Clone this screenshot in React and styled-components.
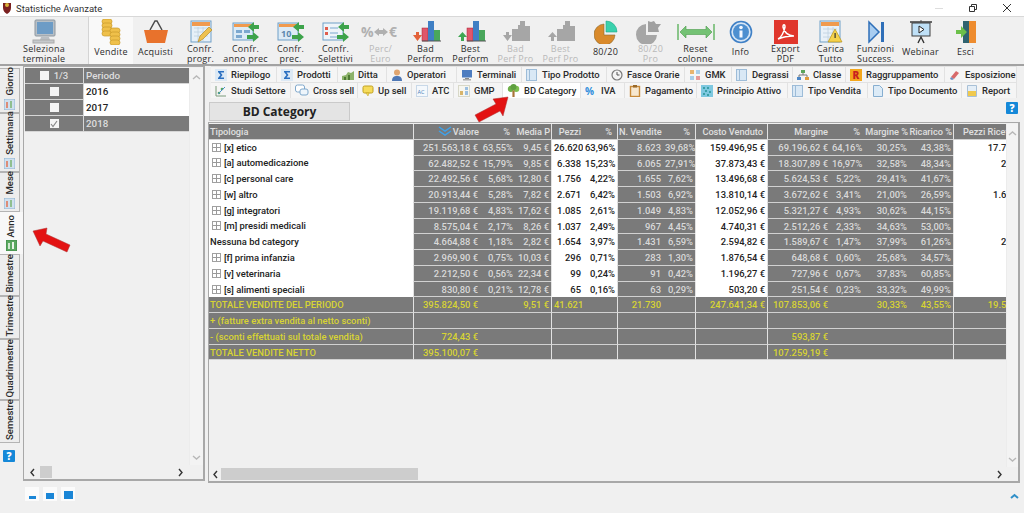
import React from 'react';
import styled, { createGlobalStyle } from 'styled-components';

const Global = createGlobalStyle`
  html, body { margin: 0; padding: 0; background: #f0f0f0; }
  * { box-sizing: border-box; }
`;
const Page = styled.div`
  position: relative; width: 1024px; height: 513px; overflow: hidden;
  display: flex; flex-direction: column; background: #f0f0f0;
  font-family: Roboto, "Liberation Sans", sans-serif; color: #222;
`;
const TitleBar = styled.div`
  height: 16px; background: #fff; display: flex; align-items: center; padding-left: 2px;
  font-size: 9.5px; color: #333; flex: none;
`;
const TitleText = styled.span` margin-left: 4px; flex: 1; `;
const WinButton = styled.span`
  width: 34px; display: flex; justify-content: center; align-items: center; height: 14px;
`;
const Toolbar = styled.div`
  height: 50px; flex: none; display: flex; background: #f0f0f0;
  border-top: 1px solid #d8d8d8; border-bottom: 2px solid #a2a2a2;
`;
const ToolFirst = styled.div`
  width: 89px; flex: none; display: flex; flex-direction: column; align-items: center;
  padding-top: 3px; border-right: 1px solid #d4d4d4;
`;
const Tool = styled.div`
  width: 45px; flex: none; display: flex; flex-direction: column; align-items: center; padding-top: 3px;
  background: ${p => (p.$active ? '#f9f9f9' : 'transparent')};
  ${p => p.$active && 'width: 44px;'}
`;
const ToolIcon = styled.div`
  height: 24px; flex: none; display: flex; align-items: center; justify-content: center;
`;
const ToolLabel = styled.div`
  flex: 1; display: flex; align-items: center; text-align: center; justify-content: center;
  font-family: "Open Sans", sans-serif;
  font-size: 9px; line-height: 9.5px; white-space: pre-line; letter-spacing: .25px; margin-bottom: 4px;
  color: ${p => (p.$off ? '#b9b9b9' : '#2c2c2c')};
`;
const Main = styled.div` flex: 1; display: flex; min-height: 0; `;
const SideTabs = styled.div` width: 23px; flex: none; display: flex; flex-direction: column; padding-top: 2px; `;
const SideTab = styled.div`
  height: ${p => p.$h}px; width: ${p => (p.$active ? 23 : 20)}px; flex: none;
  display: flex; align-items: center; justify-content: flex-start; gap: 3px; padding: 2px 0;
  flex-direction: column-reverse;
  background: ${p => (p.$active ? '#f8f8f8' : '#ededed')};
  border: 1px solid ${p => (p.$active ? '#f8f8f8' : '#b4b4b4')};
  border-left: none; font-size: 9.6px; font-weight: 500; color: #2a2a2a;
`;
const SideLabel = styled.span`
  writing-mode: vertical-rl; transform: rotate(180deg); white-space: nowrap; line-height: 12px;
`;
const SideHelp = styled.div` margin: 7px 0 0 3px; `;
const LeftColumn = styled.div` width: 182px; flex: none; display: flex; flex-direction: column; `;
const LeftPanel = styled.div`
  height: 415px; flex: none; border: 1px solid #a8a8a8; border-width: 1px 2px 2px 1px;
  display: flex; flex-direction: column; padding: 1px 0 0 1px;
`;
const PanelBody = styled.div` flex: 1; display: flex; min-height: 0; `;
const PeriodTable = styled.div` flex: 1; `;
const PeriodRow = styled.div` display: grid; grid-template-columns: 59px 1fr; height: 16px; `;
const PeriodCheckCell = styled.div`
  background: #7a7a7a; border-bottom: 1px solid #d6d6d6; display: flex; align-items: center; justify-content: center;
  gap: 5px; font-size: 9.6px; color: #ddd; font-weight: 500; border-right: 1px solid #d6d6d6;
`;
const PeriodCell = styled.div`
  background: ${p => (p.$white ? '#fff' : '#7a7a7a')};
  color: ${p => (p.$white ? '#222' : '#dedede')};
  border-bottom: 1px solid ${p => (p.$white ? '#fff' : '#d6d6d6')};
  font-size: 9.8px; font-weight: 500; padding-left: 2px; line-height: 15px;
`;
const Box = styled.span`
  width: 9px; height: 9px; background: #f4f4f4; display: inline-flex; align-items: center; justify-content: center;
`;
const VScroll = styled.div`
  width: ${p => p.$w}px; flex: none; display: flex; flex-direction: column; justify-content: space-between;
  align-items: center; padding: 5px 0 3px; background: #f3f3f3;
  border-left: 1px solid #ececec;
`;
const HScroll = styled.div`
  height: 14px; flex: none; display: flex; align-items: center; padding: 0 ${p => p.$pr}px 0 ${p => p.$pl}px; gap: ${p => p.$gap}px;
`;
const Thumb = styled.div`
  width: ${p => p.$w}px; height: 12px; background: #cdcdcd; flex: none;
`;
const Fill = styled.div` flex: 1; `;
const SizeIcons = styled.div` display: flex; align-items: flex-end; gap: 4px; padding: 4px 0 0 2px; height: 20px; `;
const SizeCell = styled.div`
  width: 14px; height: 14px; display: flex; align-items: flex-end; justify-content: center; background: #fbfbfb;
`;
const SizeBar = styled.div` background: #1b86d6; width: ${p => p.$w}px; height: ${p => p.$h}px; margin-bottom: 2px; `;
const RightColumn = styled.div` flex: 1; margin-left: 3px; margin-right: 4px; min-width: 0; display: flex; flex-direction: column; `;
const TabRow = styled.div` display: flex; height: 16px; flex: none; margin-left: 3px; `;
const Tab = styled.div`
  width: ${p => p.$w}px; flex: none; display: flex; align-items: center; gap: 4px; padding-left: 4px;
  font-size: 9.4px; font-weight: 500; color: #2a2a2a; white-space: nowrap; overflow: hidden;
  background: ${p => (p.$active ? '#fff' : '#f5f5f5')};
  border: 1px solid #e2e2e2; border-width: 1px 1px 0 0;
`;
const TitleRow = styled.div` height: 24px; flex: none; display: flex; align-items: flex-start; justify-content: space-between; padding: 4px 2px 0 1px; `;
const SectionTitle = styled.div`
  width: 141px; height: 19px; background: #e4e4e4; border: 1px solid #cacaca; text-align: center;
  font-family: "Open Sans", sans-serif;
  font-size: 12px; font-weight: 700; line-height: 17px; color: #222;
`;
const TablePanel = styled.div`
  height: 361px; flex: none; border: 1px solid #a8a8a8; border-width: 1px 2px 2px 1px;
  display: flex; flex-direction: column; padding-top: 1px;
`;
const GridWrap = styled.div` width: 797px; height: 100%; overflow: hidden; `;
const cols = '204px 67px 35px 36px 32px 34px 46px 32px 72px 63px 33px 46px 44px 66px';
const Row = styled.div` display: grid; grid-template-columns: ${cols}; height: 15.77px; `;
const Cell = styled.div`
  overflow: hidden; white-space: nowrap; font-size: 9.4px; font-weight: 500; line-height: 15px;
  text-align: ${p => (p.$left ? 'left' : 'right')}; padding: 0 2px;
  background: ${p => (p.$white ? '#fff' : '#7a7a7a')};
  color: ${p => (p.$yellow ? '#d8d433' : p.$white ? '#222' : '#d9d9d9')};
  border-bottom: 1px solid ${p => (p.$white ? '#fff' : '#d2d2d2')};
  ${p => p.$group && 'border-left: 1px solid #e2e2e2;'}
`;
const HeadCell = styled(Cell)`
  color: #e0e0e0; display: flex; justify-content: ${p => (p.$left ? 'flex-start' : 'flex-end')}; align-items: center; gap: 1px;
  font-size: 9.2px; padding: 0 1px;
  ${p => p.$pad && (p.$left ? `padding-left: ${p.$pad}px;` : `padding-right: ${p.$pad}px;`)}
`;
const NameCell = styled(Cell)` display: flex; align-items: center; gap: 3px; padding-left: ${p => (p.$exp ? 3 : 1)}px; text-align: left; `;
const Expander = styled.span`
  width: 9px; height: 9px; border: 1px solid #a0a0a0; flex: none; display: inline-flex; align-items: center; justify-content: center;
`;
const TableBody = styled.div` flex: 1; display: flex; min-height: 0; `;
const Bottom = styled.div` display: flex; justify-content: flex-end; padding: 9px 1px 0 0; `;
const OverArrow = styled.svg` position: absolute; left: ${p => p.$x}px; top: ${p => p.$y}px; `;

const S = ({ s = 12, children, v = 12 }) => <svg width={s} height={s} viewBox={`0 0 ${v} ${v}`} style={{ flex: 'none', display: 'block' }}>{children}</svg>;
const L = p => <S s={24} v={24} {...p} />;

const T = {
  monitor: <svg width="26" height="26" viewBox="0 0 26 26"><rect x="4" y="1" width="20" height="16" rx="1" fill="#b7bfc6" stroke="#8e979f" /><rect x="6" y="3" width="16" height="12" fill="#6d9cc6" /><path d="M10 18h8l1 3H9z" fill="#b9bec3" /><rect x="2" y="21" width="21" height="3" fill="#c5c9cc" stroke="#aaa" /></svg>,
  coins: <svg width="26" height="26" viewBox="0 0 26 26"><g fill="#efc04a" stroke="#c99a28" strokeWidth=".7"><rect x="4" y="0" width="10" height="5" rx="2.5" /><rect x="4" y="4" width="10" height="5" rx="2.5" /><rect x="4" y="8" width="10" height="5" rx="2.5" /><rect x="4" y="12" width="10" height="5" rx="2.5" /><rect x="12" y="9" width="10" height="5" rx="2.5" /><rect x="12" y="13" width="10" height="5" rx="2.5" /><rect x="12" y="17" width="10" height="5" rx="2.5" /><rect x="12" y="21" width="10" height="5" rx="2.5" /></g></svg>,
  basket: <svg width="26" height="26" viewBox="0 0 26 26"><path d="M7 11l5-9h2l5 9" fill="none" stroke="#4a4a4a" strokeWidth="1.5" /><path d="M1 11h24l-3 13H4z" fill="#e8722c" /></svg>,
  confP: <L><rect x="2" y="1" width="20" height="21" fill="#e6f0f8" stroke="#6f9fc8" /><rect x="3" y="2" width="18" height="4" fill="#f09a4e" /><path d="M5 8h14M5 12h14M5 16h14M9 7v14M14 7v14" stroke="#bcd0e0" strokeWidth=".8" /><path d="M9 22l2-6 9-9 3 3-9 9z" fill="#eec14f" stroke="#b98c24" strokeWidth=".7" /></L>,
  confA: <svg width="28" height="24" viewBox="0 0 28 24"><rect x="1" y="3" width="20" height="17" fill="#dcebf6" stroke="#6f9fc8" /><rect x="2" y="4" width="18" height="3" fill="#f09a4e" /><path d="M4 10h6v3H4zM4 15h6v3H4zM12 10h6v3h-6z" fill="#7ba8cf" /><path d="M16 7l6-5v3h5v4h-5v3z" fill="#3da34b" /><path d="M27 17l-6 5v-3h-6v-4h6v-3z" fill="#3da34b" /></svg>,
  confD: <svg width="28" height="24" viewBox="0 0 28 24"><rect x="1" y="3" width="20" height="17" fill="#dcebf6" stroke="#6f9fc8" /><rect x="2" y="4" width="18" height="3" fill="#f09a4e" /><text x="4" y="17" fontSize="9" fontWeight="700" fill="#5b88ad" fontFamily="Open Sans">10</text><path d="M16 7l6-5v3h5v4h-5v3z" fill="#3da34b" /><path d="M27 17l-6 5v-3h-6v-4h6v-3z" fill="#3da34b" /></svg>,
  confS: <svg width="28" height="24" viewBox="0 0 28 24"><rect x="1" y="3" width="20" height="17" fill="#eef4f9" stroke="#6f9fc8" /><path d="M3 7h3v3H3zM3 12h3v3H3z" fill="#e05d4c" /><path d="M8 8h8M8 13h8M8 17h8" stroke="#7ba8cf" /><path d="M16 7l6-5v3h5v4h-5v3z" fill="#3da34b" /><path d="M27 17l-6 5v-3h-6v-4h6v-3z" fill="#3da34b" /></svg>,
  perc: <svg width="40" height="20" viewBox="0 0 40 20"><text x="0" y="15" fontSize="14" fontWeight="700" fill="#b0b0b0" fontFamily="Open Sans">%</text><path d="M13 10l5-4v2h4V6l5 4-5 4v-2h-4v2z" fill="#b0b0b0" /><text x="28" y="15" fontSize="14" fontWeight="700" fill="#b0b0b0" fontFamily="Open Sans">€</text></svg>,
  bad: <svg width="30" height="24" viewBox="0 0 30 24"><path d="M2 15h3v-3h3v3h3l-4.500 6z" fill="#e3623a" /><rect x="11" y="8" width="6" height="13" fill="#e0566a" stroke="#a23" strokeWidth=".5" /><rect x="17" y="1" width="6" height="20" fill="#3f7fc4" /><rect x="23" y="10" width="6" height="11" fill="#49a75b" /><path d="M11 21h19" stroke="#555" /></svg>,
  best: <svg width="30" height="24" viewBox="0 0 30 24"><path d="M6.500 12l4.500 5H8v4H5v-4H2z" fill="#3fa652" /><rect x="11" y="8" width="6" height="13" fill="#e0566a" stroke="#a23" strokeWidth=".5" /><rect x="17" y="1" width="6" height="20" fill="#3f7fc4" /><rect x="23" y="10" width="6" height="11" fill="#49a75b" /><path d="M11 21h19" stroke="#555" /></svg>,
  badG: <svg width="30" height="24" viewBox="0 0 30 24" fill="#a6a6a6"><path d="M2 15h3v-3h3v3h3l-4.500 6zM11 9h6V5h2V1h5v5h5v15H11z" /></svg>,
  bestG: <svg width="30" height="24" viewBox="0 0 30 24" fill="#a6a6a6"><path d="M6.500 12l4.500 5H8v4H5v-4H2zM11 9h6V5h2V1h5v5h5v15H11z" /></svg>,
  pie: <L><path d="M10 4v11h11A10.500 10.500 0 1 1 10 4z" fill="#d98a2b" stroke="#8a6a30" strokeWidth=".6" /><path d="M12 1a11 11 0 0 1 11 11H12z" fill="#3ad1ad" stroke="#2a8" strokeWidth=".6" /></L>,
  pieG: <svg width="30" height="24" viewBox="0 0 30 24"><path d="M10 4v11h11A10.500 10.500 0 1 1 10 4z" fill="#a6a6a6" /><path d="M12 1l3 1 3-1 2 3h5l-3 4 1 4H12z" fill="#a0a0a0" /></svg>,
  reset: <svg width="38" height="18" viewBox="0 0 38 18"><path d="M1 1v16M37 1v16" stroke="#5fb35f" strokeWidth="1.4" /><path d="M3 9l6-6v3.500h20V3l6 6-6 6v-3.500H9V15z" fill="#74c274" stroke="#4a9a4a" strokeWidth=".6" /></svg>,
  info: <L><circle cx="12" cy="12" r="10.500" fill="#d7e6f5" stroke="#3f80c6" strokeWidth="1.600" /><circle cx="12" cy="12" r="8" fill="#4d8fd0" /><rect x="10.500" y="10.500" width="3" height="7" fill="#f4f8ff" /><circle cx="12" cy="7.500" r="1.800" fill="#f4f8ff" /></L>,
  pdf: <L><rect x="0" y="0" width="24" height="24" fill="#e0362c" /><path d="M4 19c3-1 6-7 7-12 0-3-2-3-2 0 1 5 5 9 11 9-4 0-9 0-16 3z" fill="none" stroke="#fff" strokeWidth="1.500" /></L>,
  carica: <L><rect x="1" y="1" width="20" height="21" fill="#e9f1f8" stroke="#6f9fc8" /><rect x="2" y="2" width="18" height="4" fill="#f09a4e" /><path d="M4 9h14M4 13h14M4 17h14M9 7v14M14 7v14" stroke="#bcd0e0" strokeWidth=".8" /><path d="M16 9l7 13H9z" fill="#f5d24c" stroke="#b99418" strokeWidth=".7" /><rect x="15.500" y="13" width="1.200" height="5" fill="#333" /></L>,
  funz: <L><path d="M5 2l10 10L5 22z" fill="#a9cdf0" stroke="#2f6fb8" strokeWidth="1.500" /><rect x="17" y="2" width="3" height="20" fill="#2f6fb8" /></L>,
  webinar: <L><path d="M12 0v2" stroke="#555" /><path d="M1 2h22" stroke="#444" strokeWidth="1.600" /><rect x="3" y="3" width="18" height="13" fill="#bfe0f7" stroke="#3f3f3f" /><path d="M10 6l5 3.500-5 3.500z" fill="#fff" stroke="#222" /><path d="M9 23l3-6 3 6" fill="none" stroke="#333" strokeWidth="1.400" /></L>,
  esci: <L><rect x="9" y="1" width="7" height="22" fill="#2f6370" /><rect x="15" y="1" width="7" height="22" fill="#ee8c2e" /><path d="M2 10h5V6l6 6-6 6v-4H2z" fill="#6cc04a" /></L>,
};

const tabIcons = {
  sigma: <S><rect width="12" height="12" fill="#dce9f5" /><path d="M3 2h6v1.500H5.500L7.500 6l-2 2.500H9V10H3V9l2.500-3L3 3z" fill="#2a6fc0" /></S>,
  ditta: <S><path d="M0 11h12V2l-3 2-3-1-2 3-4 1z" fill="#8cb26a" /><rect x="2" y="8" width="2" height="3" fill="#4d7a33" /><rect x="6" y="6" width="2" height="5" fill="#4d7a33" /></S>,
  oper: <S><circle cx="6" cy="3.500" r="3" fill="#e0a56f" /><path d="M1 12c0-4 2-5 5-5s5 1 5 5z" fill="#4f78b5" /></S>,
  term: <S><rect x="1" y="1" width="10" height="7.500" fill="#4d7cc0" /><rect x="4" y="9" width="4" height="1" fill="#888" /><rect x="2" y="10" width="8" height="1.500" fill="#aaa" /></S>,
  doc: <S><rect x=".5" y=".5" width="10" height="11" fill="#d9e8f5" stroke="#9dbcd8" /><path d="M3.500 1v10" stroke="#9dbcd8" /></S>,
  clock: <S><circle cx="6" cy="6" r="5" fill="#f4f4f4" stroke="#7a7a7a" strokeWidth="1.200" /><path d="M6 3v3h2.500" stroke="#555" fill="none" /></S>,
  gmk: <S><rect x="1" y="1" width="4" height="4" fill="#e8b470" /><rect x="7" y="1" width="4" height="4" fill="#a9cdea" /><rect x="1" y="7" width="4" height="4" fill="#a9cdea" /><rect x="7" y="7" width="4" height="4" fill="#e79a9a" /></S>,
  classe: <S><rect x="4" y="1" width="4" height="3" fill="#5aa55a" /><path d="M2 8V6h8v2M6 4v2" stroke="#777" fill="none" /><rect x="0" y="8" width="4" height="3" fill="#4d87c6" /><rect x="8" y="8" width="4" height="3" fill="#e09a3a" /></S>,
  r: <S><rect width="12" height="12" fill="#f4a71c" /><text x="2.500" y="10" fontSize="10" fontWeight="800" fill="#c81f1f" fontFamily="Open Sans">R</text></S>,
  espo: <S><path d="M2 8l5-6 3 2-5 6z" fill="#d86a6a" /><path d="M2 8l3 2-2 1-2-1z" fill="#6a8fbf" /></S>,
  studi: <S><path d="M1 1v10h10" stroke="#7a9a7a" fill="none" /><circle cx="4" cy="8" r="1.300" fill="#59a85c" /><circle cx="7" cy="4" r="1.300" fill="#59a85c" /><path d="M3 9l7-7" stroke="#4a90c8" /></S>,
  cross: <S v={14} s={14}><rect x=".5" y="1" width="9" height="7" rx="2" fill="#fff" stroke="#7fa8cc" /><rect x="5" y="5" width="8" height="6" rx="2" fill="#eef5fb" stroke="#7fa8cc" /></S>,
  up: <S><rect x="1" y="1" width="10" height="7" rx="1.500" fill="#f6dc5c" stroke="#c0a020" /><path d="M4 8l2 3 1-3z" fill="#f6dc5c" stroke="#c0a020" strokeWidth=".5" /></S>,
  atc: <S><rect x=".5" y=".5" width="11" height="11" fill="#f4f8fc" stroke="#c8d8e8" /><text x="1.500" y="9" fontSize="5.500" fill="#4d7fb8" fontFamily="Open Sans">AC</text></S>,
  gmp: <S><rect x=".5" y=".5" width="11" height="11" fill="#f6f6f0" stroke="#d8d8c8" /><rect x="2" y="6" width="3" height="4" fill="#d7b46a" /><rect x="7" y="2" width="3" height="3" fill="#9cbfe0" /><rect x="7" y="6" width="3" height="4" fill="#9cbfe0" /></S>,
  tree: <S s={13} v={12}><circle cx="3.500" cy="4.500" r="2.800" fill="#6fb04a" /><circle cx="8.500" cy="4.500" r="2.800" fill="#7fc050" /><circle cx="6" cy="2.800" r="2.800" fill="#5fa03f" /><rect x="5" y="6" width="2" height="6" fill="#a9743a" /></S>,
  pct: <S><text x="0" y="10" fontSize="10" fontWeight="700" fill="#2f8fdc" fontFamily="Open Sans">%</text></S>,
  pay: <S><rect x="1.500" y="1.500" width="9" height="10" fill="#f7e8d0" stroke="#c78a3a" strokeWidth="1.400" /><rect x="4" y="0" width="4" height="2.500" fill="#9a6a2a" /></S>,
  princ: <S><rect width="12" height="12" fill="#7ec8e0" /><path d="M2 2h2v2H2zM6 2h2v2H6zM4 5h2v2H4zM8 6h2v2H8zM2 8h2v2H2zM6 9h2v2H6z" fill="#3aa0a8" /></S>,
  tdoc: <S><path d="M1.500.5h6l3 3v8h-9z" fill="#dcebf7" stroke="#86aed0" /></S>,
  report: <S><path d="M1.500.5h9v11h-9z" fill="#e4eef7" stroke="#a8c0d6" /><rect x="2" y="6" width="8" height="5" fill="#f0c94e" /></S>,
};

const tools = [
  ['coins', 'Vendite', 0, 1], ['basket', 'Acquisti'], ['confP', 'Confr.\nprogr.'], ['confA', 'Confr.\nanno prec'],
  ['confD', 'Confr.\nprec.'], ['confS', 'Confr.\nSelettivi'], ['perc', 'Perc/\nEuro', 1], ['bad', 'Bad\nPerform'],
  ['best', 'Best\nPerform'], ['badG', 'Bad\nPerf Pro', 1], ['bestG', 'Best\nPerf Pro', 1], ['pie', '80/20'],
  ['pieG', '80/20\nPro', 1], ['reset', 'Reset\ncolonne'], ['info', 'Info'], ['pdf', 'Export\nPDF'],
  ['carica', 'Carica\nTutto'], ['funz', 'Funzioni\nSuccess.'], ['webinar', 'Webinar'], ['esci', 'Esci'],
];
const tabs1 = [['sigma', 'Riepilogo', 66], ['sigma', 'Prodotti', 61], ['ditta', 'Ditta', 49], ['oper', 'Operatori', 70], ['term', 'Terminali', 65], ['doc', 'Tipo Prodotto', 85], ['clock', 'Fasce Orarie', 78], ['gmk', 'GMK', 47], ['doc', 'Degrassi', 61], ['classe', 'Classe', 53], ['r', 'Raggruppamento', 99], ['espo', 'Esposizione', 72]];
const tabs2 = [['studi', 'Studi Settore', 80], ['cross', 'Cross sell', 67], ['up', 'Up sell', 54], ['atc', 'ATC', 42], ['gmp', 'GMP', 49], ['tree', 'BD Category', 78, 1], ['pct', 'IVA', 44], ['pay', 'Pagamento', 72], ['princ', 'Principio Attivo', 91], ['doc', 'Tipo Vendita', 80], ['tdoc', 'Tipo Documento', 94], ['report', 'Report', 55]];

const side = [['Giorno', 45, 'a'], ['Settimana', 59, 'a'], ['Mese', 40, 'a'], ['Anno', 42, 'g', 1], ['Bimestre', 42], ['Trimestre', 43], ['Quadrimestre', 61], ['Semestre', 43]];

const heads = [['Valore', 0], ['%', 5], ['Media P', 0], ['Pezzi', 2], ['%', 5], ['N. Vendite', 0], ['%', 5], ['Costo Venduto', 4], ['Margine', 2], ['%', 3], ['Margine %', 0], ['Ricarico %', 0], ['Pezzi Ricetta', 9]];
const rows = [
  ['[x] etico', 1, '251.563,18 €', '63,55%', '9,45 €', '26.620', '63,96%', '8.623', '39,68%', '159.496,95 €', '69.196,62 €', '64,16%', '30,25%', '43,38%', '17.744'],
  ['[a] automedicazione', 1, '62.482,52 €', '15,79%', '9,85 €', '6.338', '15,23%', '6.065', '27,91%', '37.873,43 €', '18.307,89 €', '16,97%', '32,58%', '48,34%', '212'],
  ['[c] personal care', 1, '22.492,56 €', '5,68%', '12,80 €', '1.756', '4,22%', '1.655', '7,62%', '13.496,68 €', '5.624,53 €', '5,22%', '29,41%', '41,67%', ''],
  ['[w] altro', 1, '20.913,44 €', '5,28%', '7,82 €', '2.671', '6,42%', '1.503', '6,92%', '13.810,14 €', '3.672,62 €', '3,41%', '21,00%', '26,59%', '1.615'],
  ['[g] integratori', 1, '19.119,68 €', '4,83%', '17,62 €', '1.085', '2,61%', '1.049', '4,83%', '12.052,96 €', '5.321,27 €', '4,93%', '30,62%', '44,15%', ''],
  ['[m] presidi medicali', 1, '8.575,04 €', '2,17%', '8,26 €', '1.037', '2,49%', '967', '4,45%', '4.740,31 €', '2.512,26 €', '2,33%', '34,63%', '53,00%', ''],
  ['Nessuna bd category', 0, '4.664,88 €', '1,18%', '2,82 €', '1.654', '3,97%', '1.431', '6,59%', '2.594,82 €', '1.589,67 €', '1,47%', '37,99%', '61,26%', '201'],
  ['[f] prima infanzia', 1, '2.969,90 €', '0,75%', '10,03 €', '296', '0,71%', '283', '1,30%', '1.876,54 €', '648,68 €', '0,60%', '25,68%', '34,57%', ''],
  ['[v] veterinaria', 1, '2.212,50 €', '0,56%', '22,34 €', '99', '0,24%', '91', '0,42%', '1.196,27 €', '727,96 €', '0,67%', '37,83%', '60,85%', ''],
  ['[s] alimenti speciali', 1, '830,80 €', '0,21%', '12,78 €', '65', '0,16%', '63', '0,29%', '503,20 €', '251,54 €', '0,23%', '33,32%', '49,99%', ''],
];
const totals = [
  ['TOTALE VENDITE DEL PERIODO', '395.824,50 €', '', '9,51 €', '41.621', '', '21.730', '', '247.641,34 €', '107.853,06 €', '', '30,33%', '43,55%', '19.563'],
  ['+ (fatture extra vendita al netto sconti)', '', '', '', '', '', '', '', '', '', '', '', '', ''],
  ['- (sconti effettuati sul totale vendita)', '724,43 €', '', '', '', '', '', '', '', '593,87 €', '', '', '', ''],
  ['TOTALE VENDITE NETTO', '395.100,07 €', '', '', '', '', '', '', '', '107.259,19 €', '', '', '', ''],
];
const groupStart = new Set([0, 3, 5, 7, 8, 12]);
const whiteCols = new Set([3, 4, 7, 12]);

const Chevron = ({ d, c = '#b8b8b8', w = 1.4 }) => <svg width="9" height="9" viewBox="0 0 9 9" style={{ display: 'block', flex: 'none' }}><path d={{ up: 'M1 6l3.500-3 3.500 3', down: 'M1 3l3.500 3 3.500-3', left: 'M6 1L3 4.500 6 8', right: 'M3 1l3 3.500L3 8' }[d]} fill="none" stroke={c} strokeWidth={w} /></svg>;
const Help = () => <svg width="12" height="12" viewBox="0 0 12 12" style={{ display: 'block' }}><rect width="12" height="12" rx="1" fill="#1588d8" /><text x="6" y="10" textAnchor="middle" fontSize="10" fontWeight="800" fill="#fff" fontFamily="Open Sans">?</text></svg>;
const Check = () => <svg width="8" height="8" viewBox="0 0 8 8"><path d="M1 4l2 2.500L7 1" fill="none" stroke="#888" strokeWidth="1.200" /></svg>;
const SmallChart = ({ g }) => <svg width="11" height="11" viewBox="0 0 11 11" style={{ display: 'block', flex: 'none' }}><rect width="11" height="11" fill={g ? '#5aa860' : '#cfe0ef'} stroke={g ? '#3f8a46' : '#8fb3d2'} /><rect x="2" y="3" width="2" height="6" fill={g ? '#cfe8cf' : '#dd8c78'} /><rect x="6" y="2" width="2" height="7" fill={g ? '#e8f4e8' : '#8fbf8f'} /></svg>;

export default function App() {
  return (
    <Page>
      <Global />
      <TitleBar>
        <svg width="10" height="12" viewBox="0 0 10 12" style={{ flex: 'none' }}><path d="M1 1h8v5c0 3-2 5-4 6-2-1-4-3-4-6z" fill="#7a2020" /><circle cx="5" cy="3" r="2" fill="#d8b23a" /></svg>
        <TitleText>Statistiche Avanzate</TitleText>
        <WinButton><svg width="10" height="3"><path d="M1 1.500h8" stroke="#ddd" /></svg></WinButton>
        <WinButton><svg width="10" height="10" viewBox="0 0 10 10"><path d="M1.500 3.500h5v5h-5zM3.500 3.500v-2h5v5h-2" fill="none" stroke="#333" /></svg></WinButton>
        <WinButton><svg width="10" height="10" viewBox="0 0 10 10"><path d="M1 1l8 8M9 1l-8 8" stroke="#333" /></svg></WinButton>
      </TitleBar>
      <Toolbar>
        <ToolFirst>
          <ToolIcon>{T.monitor}</ToolIcon>
          <ToolLabel>{'Seleziona\nterminale'}</ToolLabel>
        </ToolFirst>
        {tools.map(([ic, label, off, active]) => (
          <Tool key={label} $active={active}>
            <ToolIcon>{T[ic]}</ToolIcon>
            <ToolLabel $off={off}>{label}</ToolLabel>
          </Tool>
        ))}
      </Toolbar>
      <Main>
        <SideTabs>
          {side.map(([label, h, ic, active]) => (
            <SideTab key={label} $h={h} $active={active}>
              {ic && <SmallChart g={ic === 'g'} />}
              <SideLabel>{label}</SideLabel>
            </SideTab>
          ))}
          <SideHelp><Help /></SideHelp>
        </SideTabs>
        <LeftColumn>
          <LeftPanel>
            <PanelBody>
              <PeriodTable>
                <PeriodRow>
                  <PeriodCheckCell><Box />1/3</PeriodCheckCell>
                  <PeriodCell>Periodo</PeriodCell>
                </PeriodRow>
                <PeriodRow><PeriodCheckCell><Box /></PeriodCheckCell><PeriodCell $white>2016</PeriodCell></PeriodRow>
                <PeriodRow><PeriodCheckCell><Box /></PeriodCheckCell><PeriodCell $white>2017</PeriodCell></PeriodRow>
                <PeriodRow><PeriodCheckCell><Box><Check /></Box></PeriodCheckCell><PeriodCell>2018</PeriodCell></PeriodRow>
              </PeriodTable>
              <VScroll $w={14}><Chevron d="up" /><Chevron d="down" /></VScroll>
            </PanelBody>
            <HScroll $pl={3} $pr={18} $gap={3}>
              <Chevron d="left" c="#333" />
              <Thumb $w={12} />
              <Fill />
              <Chevron d="right" c="#333" />
            </HScroll>
          </LeftPanel>
          <SizeIcons>
            <SizeCell><SizeBar $w={7} $h={3} /></SizeCell>
            <SizeCell><SizeBar $w={8} $h={6} /></SizeCell>
            <SizeCell><SizeBar $w={9} $h={8} /></SizeCell>
          </SizeIcons>
        </LeftColumn>
        <RightColumn>
          <TabRow>
            {tabs1.map(([ic, l, w]) => <Tab key={l} $w={w}>{tabIcons[ic]}<span>{l}</span></Tab>)}
          </TabRow>
          <TabRow>
            {tabs2.map(([ic, l, w, a]) => <Tab key={l} $w={w} $active={a}>{tabIcons[ic]}<span>{l}</span></Tab>)}
          </TabRow>
          <TitleRow>
            <SectionTitle>BD Category</SectionTitle>
            <Help />
          </TitleRow>
          <TablePanel>
            <TableBody>
              <GridWrap>
                <Row>
                  <HeadCell $left>Tipologia</HeadCell>
                  {heads.map(([h, pad], i) => (
                    <HeadCell key={i} $group={groupStart.has(i)} $pad={pad} $left={i === 5 || i === 12}>
                      {i === 0 && <svg width="14" height="10" viewBox="0 0 14 10" style={{ flex: 'none' }}><path d="M1 1l6 4 6-4M1 5l6 4 6-4" fill="none" stroke="#3fa2ea" strokeWidth="1.500" /></svg>}
                      {h}
                    </HeadCell>
                  ))}
                </Row>
                {rows.map(r => (
                  <Row key={r[0]}>
                    <NameCell $white $exp={r[1]}>
                      {r[1] ? <Expander><svg width="7" height="7" viewBox="0 0 7 7"><path d="M3.500 0v7M0 3.500h7" stroke="#999" /></svg></Expander> : null}
                      {r[0]}
                    </NameCell>
                    {r.slice(2).map((v, i) => (
                      <Cell key={i} $white={whiteCols.has(i)} $group={groupStart.has(i)}>{v}</Cell>
                    ))}
                  </Row>
                ))}
                {totals.map(r => (
                  <Row key={r[0]}>
                    <NameCell $yellow>{r[0]}</NameCell>
                    {r.slice(1).map((v, i) => (
                      <Cell key={i} $yellow $group={groupStart.has(i)}>{v}</Cell>
                    ))}
                  </Row>
                ))}
              </GridWrap>
              <VScroll $w={12}><Chevron d="up" /><Chevron d="down" /></VScroll>
            </TableBody>
            <HScroll $pl={2} $pr={14} $gap={1}>
              <Chevron d="left" c="#333" />
              <Thumb $w={197} />
              <Fill />
              <Chevron d="right" c="#333" />
            </HScroll>
          </TablePanel>
          <Bottom><Chevron d="up" c="#2f8fc8" w={2} /></Bottom>
        </RightColumn>
      </Main>
      <OverArrow $x={472} $y={94} width="42" height="32" viewBox="0 0 42 32"><path d="M36 3L21 5l3 5L3 21l4 7 21-11 3 5z" fill="#e31212" stroke="#a33" strokeWidth=".5" /></OverArrow>
      <OverArrow $x={30} $y={224} width="44" height="32" viewBox="0 0 44 32"><path d="M3 7l14-3-1 6 24 11-3 7-24-11-3 5z" fill="#e31212" stroke="#a33" strokeWidth=".5" /></OverArrow>
    </Page>
  );
}
